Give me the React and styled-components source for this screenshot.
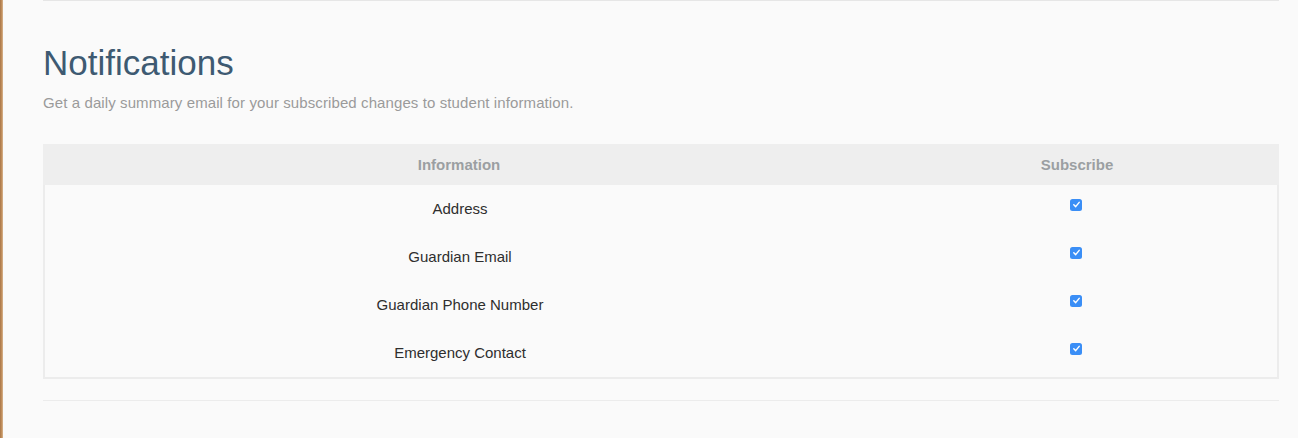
import React from "react";
import styled, { createGlobalStyle } from "styled-components";

const Global = createGlobalStyle`
  html, body { margin: 0; padding: 0; background: #fafafa; }
  body { font-family: "Liberation Sans", Arial, Helvetica, sans-serif; }
`;

const Page = styled.div`
  display: flex;
  min-height: 438px;
  background: #fafafa;
`;

const Strip = styled.div`
  width: 3px;
  flex: none;
  background: linear-gradient(to right, #a87648, #c4925f 60%, #d8b896);
`;

const Content = styled.main`
  flex: 1;
  padding: 0 19px 0 40px;
  display: flex;
  flex-direction: column;
`;

const Rule = styled.hr`
  margin: 0;
  border: 0;
  height: 1px;
  background: ${(p) => p.$color || "#e8e8e8"};
`;

const Title = styled.h2`
  margin: 43px 0 0;
  font-size: 35px;
  line-height: 38.5px;
  font-weight: normal;
  color: #3e5a72;
`;

const Lead = styled.p`
  margin: 10px 0 0;
  font-size: 15px;
  line-height: 20px;
  letter-spacing: 0.1px;
  color: #9a9a9a;
`;

const Table = styled.div`
  margin-top: 31px;
  border: 2px solid #ececec;
  border-top: 0;
  display: grid;
  grid-template-columns: 830px 1fr;
`;

const HeadCell = styled.div`
  background: #eeeeee;
  height: 41px;
  line-height: 41px;
  text-align: center;
  font-size: 15px;
  font-weight: bold;
  color: #9b9fa2;
  margin: ${(p) => (p.$first ? "0 0 0 -2px" : "0 -2px 0 0")};
`;

const Cell = styled.div`
  height: 48px;
  line-height: 48px;
  text-align: center;
  font-size: 15px;
  color: #2e2e2e;
`;

const BoxCell = styled.div`
  height: 48px;
  display: flex;
  justify-content: center;
  align-items: flex-start;
  padding-top: 14px;
  box-sizing: border-box;
`;

const Check = styled.span`
  width: 12px;
  height: 12px;
  border-radius: 2.5px;
  background: #3a8ef6;
  display: flex;
  align-items: center;
  justify-content: center;
`;

const Spacer = styled.div`
  height: 21px;
`;

const rows = ["Address", "Guardian Email", "Guardian Phone Number", "Emergency Contact"];

const CheckBox = () => (
  <Check role="checkbox" aria-checked="true">
    <svg width="9" height="9" viewBox="0 0 10 10">
      <path d="M2 5.3 L4.1 7.4 L8 2.6" fill="none" stroke="#fff" strokeWidth="1.6" strokeLinecap="round" strokeLinejoin="round" />
    </svg>
  </Check>
);

export default function App() {
  return (
    <>
      <Global />
      <Page>
        <Strip />
        <Content>
          <Rule $color="#e6e6e6" />
          <Title>Notifications</Title>
          <Lead>Get a daily summary email for your subscribed changes to student information.</Lead>
          <Table>
            <HeadCell $first>Information</HeadCell>
            <HeadCell>Subscribe</HeadCell>
            {rows.map((r) => (
              <React.Fragment key={r}>
                <Cell>{r}</Cell>
                <BoxCell>
                  <CheckBox />
                </BoxCell>
              </React.Fragment>
            ))}
          </Table>
          <Spacer />
          <Rule $color="#ececec" />
        </Content>
      </Page>
    </>
  );
}
